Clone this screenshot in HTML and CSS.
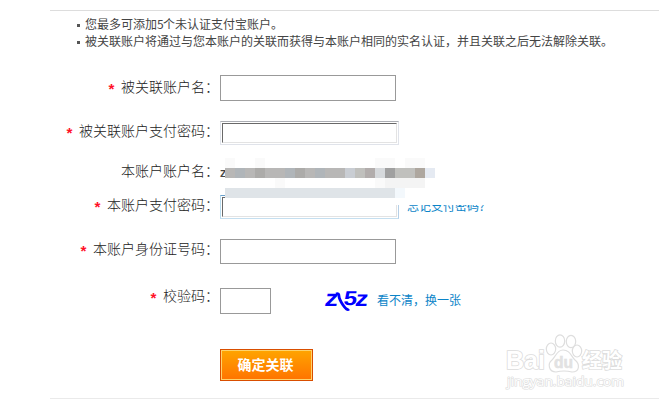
FILE: index.html
```html
<!DOCTYPE html>
<html lang="zh-CN">
<head>
<meta charset="utf-8">
<title>关联账户</title>
<link rel="stylesheet" href="styles.css">
</head>
<body>
<main class="panel">
  <ul class="notes">
    <li>您最多可添加<span class="num">5</span>个未认证支付宝账户。</li>
    <li>被关联账户将通过与您本账户的关联而获得与本账户相同的实名认证，并且关联之后无法解除关联。</li>
  </ul>
  <form class="form">
    <div class="row row-name">
      <label><i>*</i>被关联账户名：</label>
      <input class="field" type="text">
    </div>
    <div class="row row-pay">
      <label><i>*</i>被关联账户支付密码：</label>
      <span class="secure"><input type="password"></span>
    </div>
    <div class="row row-own">
      <label>本账户账户名：</label>
      <span class="account">z</span>
      <svg class="mosaic" width="270" height="47" viewBox="0 0 270 47" shape-rendering="crispEdges">
        <path fill="#fff" d="M0 10h210v20H0zM170 30h100v17H170z"/>
        <path fill="#fafafa" d="M0 0h10v10H0zM30 0h10v10H30zM50 20h10v10H50zM150 0h20v10H150zM180 0h20v10H180zM150 20h10v10H150z"/>
        <path fill="#f4f4f4" d="M160 20h40v10H160z"/>
        <path fill="#b8b7b6" d="M0 10h120v10H0z"/>
        <path fill="#b0b5b9" d="M10 10h10v10H10zM60 10h10v10H60zM90 10h10v10H90z"/>
        <path fill="#acaba9" d="M30 10h10v10H30zM70 10h10v10H70z"/>
        <path fill="#c9cdd3" d="M120 10h10v10H120z"/>
        <path fill="#c0c0bd" d="M130 10h10v10H130zM170 10h20v10H170z"/>
        <path fill="#b2adac" d="M140 10h10v10H140z"/>
        <path fill="#d6d9dc" d="M150 10h10v10H150z"/>
        <path fill="#a0a0a0" d="M160 10h10v10H160z"/>
        <path fill="#aea79f" d="M190 10h10v10H190z"/>
        <path fill="#e5eaf2" d="M200 10h10v10H200z"/>
        <path fill="#dfe4e8" d="M0 30h170v10H0z"/>
        <path fill="#f3f8fc" d="M170 30h10v10H170z"/>
      </svg>
    </div>
    <div class="row row-ownpay">
      <label><i>*</i>本账户支付密码：</label>
      <span class="secure active"><input type="password"></span>
      <a class="forgot">忘记支付密码?</a>
    </div>
    <div class="row row-id">
      <label><i>*</i>本账户身份证号码：</label>
      <input class="field short" type="text">
    </div>
    <div class="row row-code">
      <label><i>*</i>校验码：</label>
      <input class="field code" type="text">
      <svg class="captcha" width="50" height="28" viewBox="0 0 50 28">
        <text transform="translate(3 20) scale(1.15 1) skewX(-8)" font-size="23">z</text>
        <text transform="translate(22 19) scale(1.2 1) skewX(-6)" font-size="20">5</text>
        <text transform="translate(33.500 20) scale(1.15 1) skewX(-8)" font-size="22">z</text>
        <path d="M15 8Q18 7 18 10T22 19T28 23" fill="none" stroke="#00f" stroke-width="2.800"/>
      </svg>
      <a class="refresh">看不清，换一张</a>
    </div>
    <button class="submit" type="button">确定关联</button>
  </form>
</main>
<svg class="watermark" width="124" height="62" viewBox="0 0 124 62">
  <g fill="#fff" stroke="#dedede" stroke-width="1.2">
    <ellipse cx="48" cy="18" rx="4.700" ry="6"/>
    <ellipse cx="57" cy="10" rx="4.700" ry="6.200"/>
    <ellipse cx="68" cy="10.500" rx="4.700" ry="6.200"/>
    <ellipse cx="74" cy="20" rx="4.700" ry="6"/>
    <path d="M60 19C54 19 53 25 49 29C44 33 46 41 53 41Q61 39 69 41C77 41 77 33 72 29C68 25 67 19 60 19Z"/>
  </g>
  <g class="mark">
    <text x="3" y="38" font-size="26" textLength="39" lengthAdjust="spacingAndGlyphs">Bai</text>
    <text class="du" x="51" y="37" font-size="16" textLength="19" lengthAdjust="spacingAndGlyphs">du</text>
    <text class="cn" x="79" y="37" font-size="20" textLength="40">经验</text>
    <text class="site" x="4" y="55" font-size="12" textLength="117" lengthAdjust="spacingAndGlyphs">jingyan.baidu.com</text>
  </g>
</svg>
</body>
</html>
```
FILE: styles.css
```css
* { box-sizing: border-box; }

body {
  margin: 0;
  padding: 10px 0 0 50px;
  width: 659px;
  height: 404px;
  overflow: hidden;
  background: #fff;
  color: #444;
  font-family: "Noto Sans CJK SC", sans-serif;
}

.panel {
  height: 389px;
  border-top: 1px solid #ddd;
  border-bottom: 1px solid #eaeaea;
}

.notes {
  margin: 0;
  padding: 4px 0 0 35px;
  height: 64px;
  list-style: none;
  font-size: 12px;
  line-height: 17px;
  white-space: nowrap;
}

.notes li::before {
  content: "";
  float: left;
  width: 3px;
  height: 3px;
  margin: 9px 0 0 -8px;
  background: #555;
}

.num {
  display: inline-block;
  width: 6px;
}

.row {
  position: relative;
  display: flex;
  align-items: flex-start;
}

.row-name { height: 44px; }
.row-pay { height: 40px; }
.row-own { height: 34px; }
.row-ownpay { height: 44px; }
.row-id { height: 47px; }
.row-code { height: 65px; }

label {
  width: 170px;
  flex: none;
  margin-top: -1px;
  padding-right: 1px;
  text-align: right;
  color: #222;
  font-size: 14px;
  font-weight: 300;
  line-height: 24px;
  white-space: nowrap;
}

label i {
  display: inline-block;
  width: 8px;
  margin-right: 6px;
  color: #ff1028;
  font: bold 15px/0 "Liberation Mono", monospace;
  vertical-align: -3px;
}

input { outline: 0; border-radius: 0; padding: 0; background: #fff; }

.field {
  width: 176px;
  height: 26px;
  border: 1px solid #999;
}

.short { height: 25px; margin-top: 2px; }
.code { width: 51px; margin-top: 4px; }

.secure {
  width: 179px;
  height: 24px;
  margin-top: 2px;
  padding: 1px;
  border: 1px solid #e0e3ea;
  border-top-color: #abadb3;
}

.secure input {
  display: block;
  width: 175px;
  height: 20px;
  border: 1px solid #e3e3e3;
  border-top-color: #696969;
  border-left-color: #696969;
}

.active { border-color: #6aa1cc #b5cfe7 #c5dff0 #b9dcef; }

.account {
  font: 600 13px/26px "Open Sans", sans-serif;
}

.mosaic {
  position: absolute;
  left: 175px;
  top: -1px;
  z-index: 1;
}

a { color: #0b84c8; font-size: 12px; white-space: nowrap; }
.forgot { margin: 4px 0 0 8px; line-height: 18px; }
.refresh { margin: 7px 0 0 6px; line-height: 18px; }

.captcha { margin: 2px 0 0 50px; }
.captcha text {
  fill: #00f;
  font-family: "Liberation Sans", sans-serif;
  font-weight: bold;
}

.submit {
  display: block;
  width: 93px;
  height: 32px;
  margin-left: 170px;
  padding: 0 2px 2px 0;
  border: 1px solid #d94e00;
  box-shadow: inset 0 0 0 1px #ffd36b;
  background: linear-gradient(#ffa500, #ff7300);
  color: #fff;
  font: bold 14px/28px "Noto Sans CJK SC", sans-serif;
}

.watermark {
  position: absolute;
  left: 503px;
  top: 331px;
}

.mark text {
  fill: #fff;
  stroke: #dcdcdc;
  stroke-width: 1.6;
  paint-order: stroke;
  font-family: "Liberation Sans", sans-serif;
  font-weight: bold;
}

.mark .du { fill: #e2e2e2; stroke-width: .5; }
.mark .cn { font-family: "Noto Sans CJK SC", sans-serif; }
.mark .site { font-family: "Open Sans", sans-serif; font-weight: 400; stroke-width: 1.2; }
```
